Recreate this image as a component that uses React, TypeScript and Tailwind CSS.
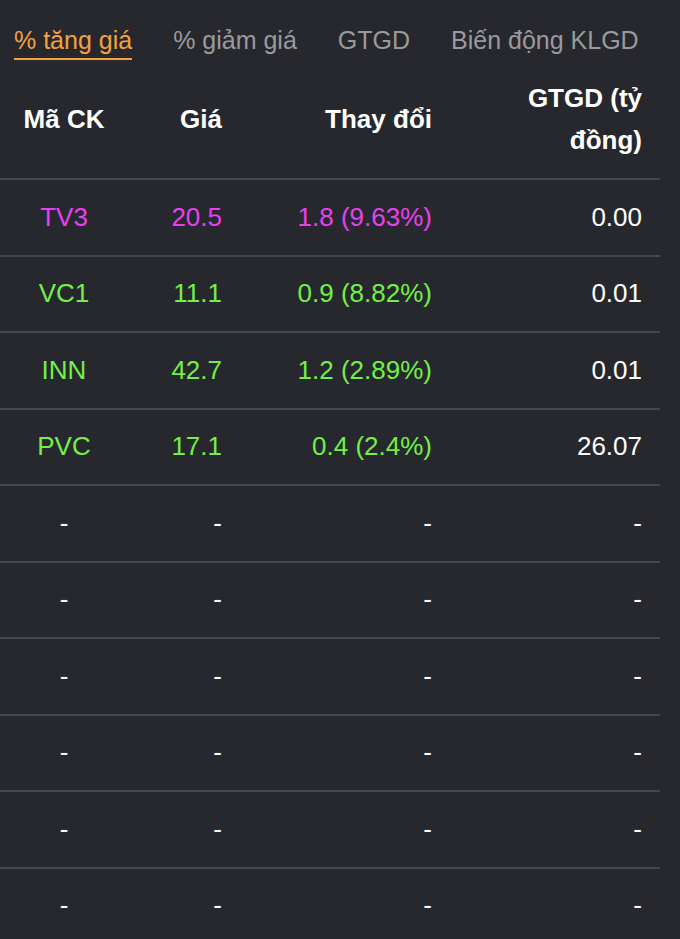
import React from "react";

type Row = { code: string; price: string; change: string; value: string; tone: "ceil" | "up" | "none" };

const rows: Row[] = [
    { code: "TV3", price: "20.5", change: "1.8 (9.63%)", value: "0.00", tone: "ceil" },
    { code: "VC1", price: "11.1", change: "0.9 (8.82%)", value: "0.01", tone: "up" },
    { code: "INN", price: "42.7", change: "1.2 (2.89%)", value: "0.01", tone: "up" },
    { code: "PVC", price: "17.1", change: "0.4 (2.4%)", value: "26.07", tone: "up" },
    ...Array.from({ length: 6 }, () => ({ code: "-", price: "-", change: "-", value: "-", tone: "none" as const })),
];

const tabs = ["% tăng giá", "% giảm giá", "GTGD", "Biến động KLGD"];

const toneClass = (tone: Row["tone"]) =>
    tone === "ceil" ? "text-[#e840f0]" : tone === "up" ? "text-[#72f046]" : "text-white";

const App: React.FC = () => {
    return (
        <div className="min-h-[939px] w-[680px] bg-[#27282d] font-['Liberation_Sans',Arial,sans-serif] overflow-hidden">
            {/* Tabs */}
            <div className="flex pl-[14px] gap-[41px]">
                {tabs.map((t, i) => (
                    <button
                        key={t}
                        className={`pt-[25px] pb-[3px] text-[25px] leading-[30px] border-b-2 whitespace-nowrap ${
                            i === 0 ? "text-[#f3a23c] border-[#f3a23c]" : "text-[#9a9a9c] border-transparent"
                        }`}
                    >
                        {t}
                    </button>
                ))}
            </div>

            <div className="w-[660px]">
                {/* Header */}
                <div className="grid grid-cols-[128px_112px_210px_210px] h-[120px] items-center border-b-2 border-[#46474b] text-white font-bold text-[26px] leading-[42px]">
                    <div className="text-center">Mã CK</div>
                    <div className="text-right pr-[18px]">Giá</div>
                    <div className="text-right pr-[18px]">Thay đổi</div>
                    <div className="text-right pr-[18px] pl-[60px]">GTGD (tỷ đồng)</div>
                </div>

                {/* Rows */}
                {rows.map((r, i) => (
                    <div
                        key={i}
                        className="grid grid-cols-[128px_112px_210px_210px] h-[76.5px] items-center border-b-2 border-[#46474b] text-[26px]"
                    >
                        <div className={`text-center ${toneClass(r.tone)}`}>{r.code}</div>
                        <div className={`text-right pr-[18px] ${toneClass(r.tone)}`}>{r.price}</div>
                        <div className={`text-right pr-[18px] ${toneClass(r.tone)}`}>{r.change}</div>
                        <div className="text-right pr-[18px] text-white">{r.value}</div>
                    </div>
                ))}
            </div>
        </div>
    );
};

export default App;
